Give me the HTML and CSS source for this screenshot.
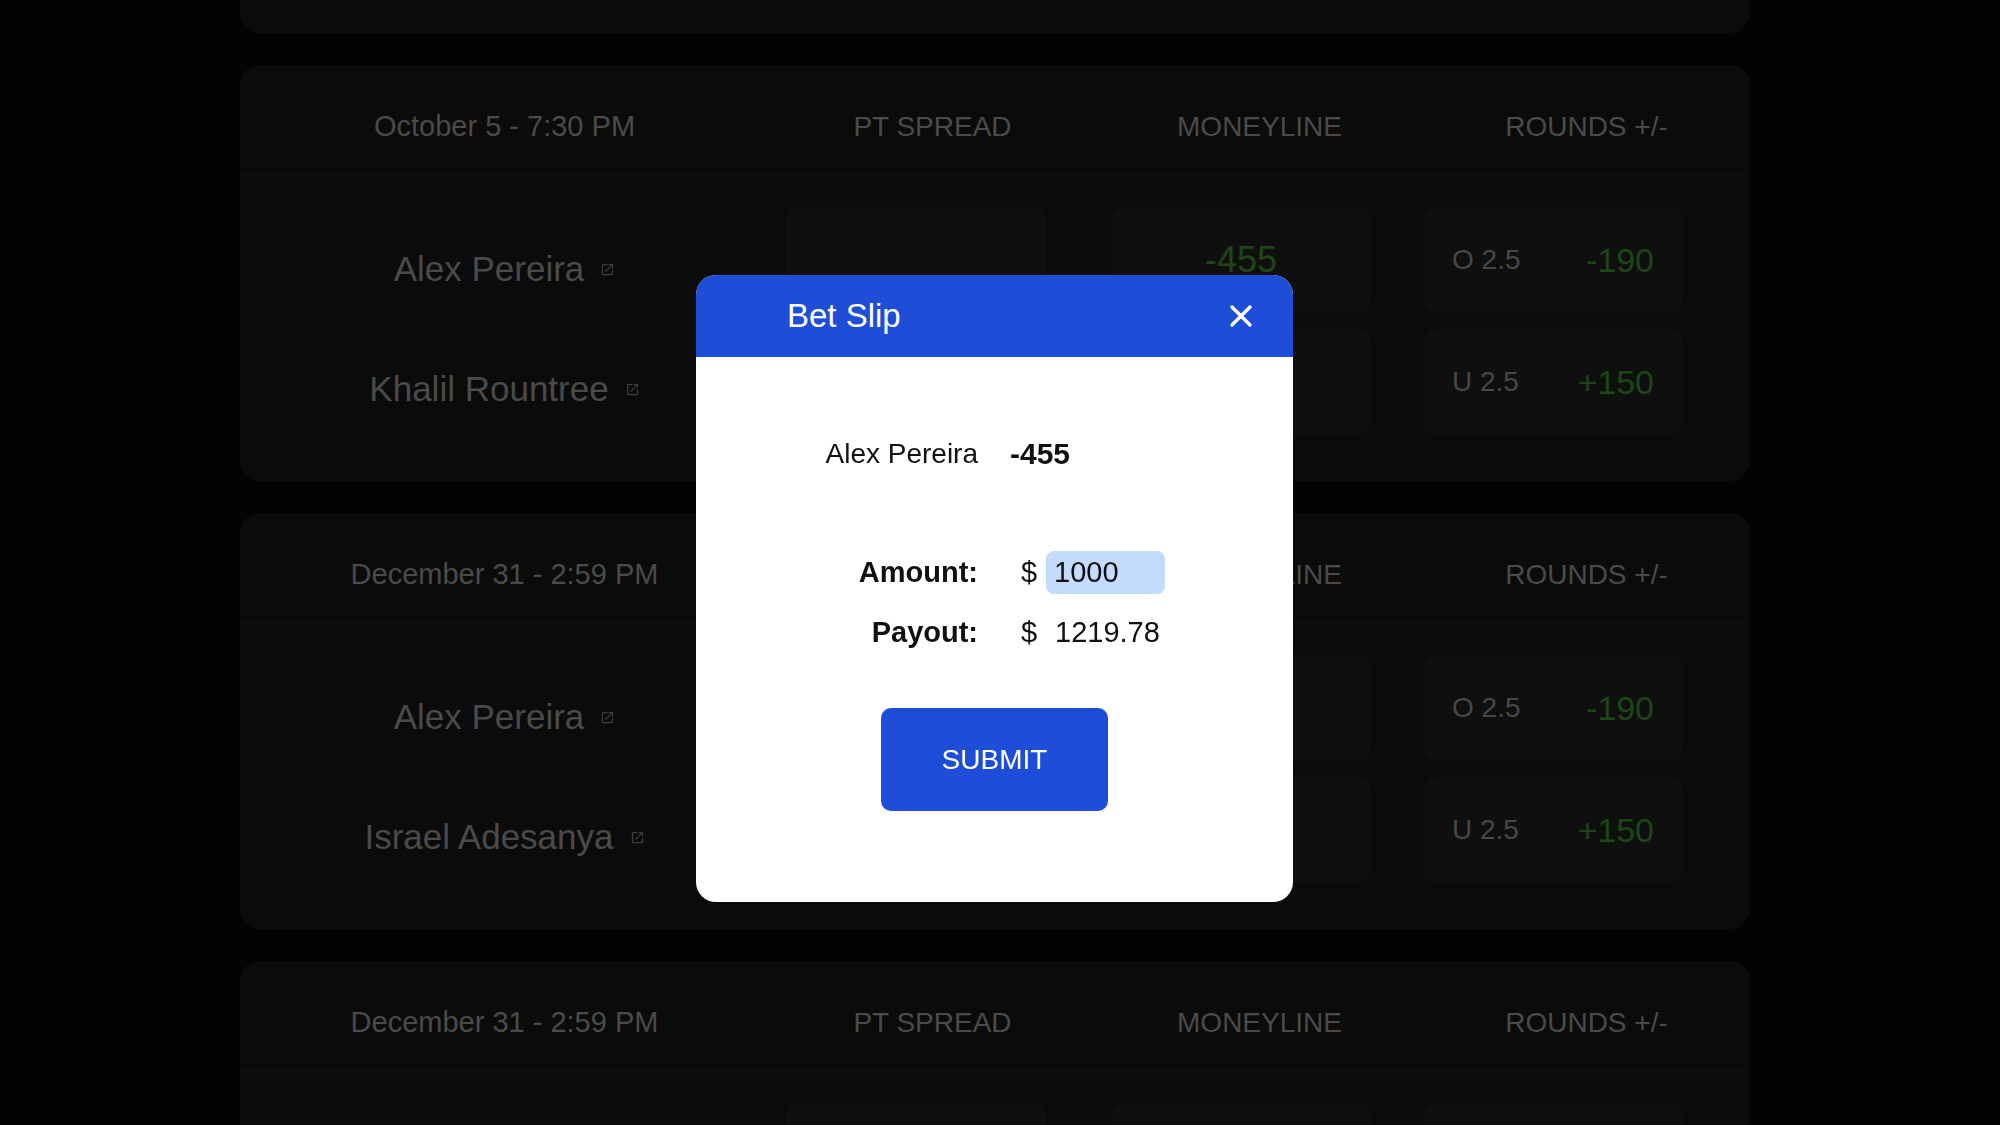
FILE: index.html
```html
<!DOCTYPE html>
<html lang="en">
<head>
<meta charset="utf-8">
<title>Fight Odds</title>
<link rel="stylesheet" href="styles.css">
</head>
<body>
<main class="list">
  <section class="card card-partial" aria-hidden="true"></section>

  <section class="card">
    <div class="card-head">
      <div class="head-date">October 5 - 7:30 PM</div>
      <div class="head-col">PT SPREAD</div>
      <div class="head-col">MONEYLINE</div>
      <div class="head-col">ROUNDS +/-</div>
    </div>
    <div class="card-body">
      <div class="names">
        <div class="name">Alex Pereira <svg class="ext" viewBox="0 0 24 24"><path d="M19 19H5V5h7V3H5a2 2 0 0 0-2 2v14a2 2 0 0 0 2 2h14c1.1 0 2-.9 2-2v-7h-2v7zM14 3v2h3.59l-9.83 9.83 1.41 1.41L19 6.41V10h2V3h-7z"/></svg></div>
        <div class="name">Khalil Rountree <svg class="ext" viewBox="0 0 24 24"><path d="M19 19H5V5h7V3H5a2 2 0 0 0-2 2v14a2 2 0 0 0 2 2h14c1.1 0 2-.9 2-2v-7h-2v7zM14 3v2h3.59l-9.83 9.83 1.41 1.41L19 6.41V10h2V3h-7z"/></svg></div>
      </div>
      <div class="boxes"><div class="box"></div><div class="box"></div></div>
      <div class="boxes"><div class="box center"><span class="odds">-455</span></div><div class="box center"><span class="odds">+350</span></div></div>
      <div class="boxes"><div class="box split"><span class="line">O 2.5</span><span class="odds">-190</span></div><div class="box split"><span class="line">U 2.5</span><span class="odds">+150</span></div></div>
    </div>
  </section>

  <section class="card">
    <div class="card-head">
      <div class="head-date">December 31 - 2:59 PM</div>
      <div class="head-col">PT SPREAD</div>
      <div class="head-col">MONEYLINE</div>
      <div class="head-col">ROUNDS +/-</div>
    </div>
    <div class="card-body">
      <div class="names">
        <div class="name">Alex Pereira <svg class="ext" viewBox="0 0 24 24"><path d="M19 19H5V5h7V3H5a2 2 0 0 0-2 2v14a2 2 0 0 0 2 2h14c1.1 0 2-.9 2-2v-7h-2v7zM14 3v2h3.59l-9.83 9.83 1.41 1.41L19 6.41V10h2V3h-7z"/></svg></div>
        <div class="name">Israel Adesanya <svg class="ext" viewBox="0 0 24 24"><path d="M19 19H5V5h7V3H5a2 2 0 0 0-2 2v14a2 2 0 0 0 2 2h14c1.1 0 2-.9 2-2v-7h-2v7zM14 3v2h3.59l-9.83 9.83 1.41 1.41L19 6.41V10h2V3h-7z"/></svg></div>
      </div>
      <div class="boxes"><div class="box"></div><div class="box"></div></div>
      <div class="boxes"><div class="box center"><span class="odds">-455</span></div><div class="box center"><span class="odds">+350</span></div></div>
      <div class="boxes"><div class="box split"><span class="line">O 2.5</span><span class="odds">-190</span></div><div class="box split"><span class="line">U 2.5</span><span class="odds">+150</span></div></div>
    </div>
  </section>

  <section class="card">
    <div class="card-head">
      <div class="head-date">December 31 - 2:59 PM</div>
      <div class="head-col">PT SPREAD</div>
      <div class="head-col">MONEYLINE</div>
      <div class="head-col">ROUNDS +/-</div>
    </div>
    <div class="card-body">
      <div class="names">
        <div class="name">Alex Pereira <svg class="ext" viewBox="0 0 24 24"><path d="M19 19H5V5h7V3H5a2 2 0 0 0-2 2v14a2 2 0 0 0 2 2h14c1.1 0 2-.9 2-2v-7h-2v7zM14 3v2h3.59l-9.83 9.83 1.41 1.41L19 6.41V10h2V3h-7z"/></svg></div>
        <div class="name">Israel Adesanya <svg class="ext" viewBox="0 0 24 24"><path d="M19 19H5V5h7V3H5a2 2 0 0 0-2 2v14a2 2 0 0 0 2 2h14c1.1 0 2-.9 2-2v-7h-2v7zM14 3v2h3.59l-9.83 9.83 1.41 1.41L19 6.41V10h2V3h-7z"/></svg></div>
      </div>
      <div class="boxes"><div class="box"></div><div class="box"></div></div>
      <div class="boxes"><div class="box center"><span class="odds">-455</span></div><div class="box center"><span class="odds">+350</span></div></div>
      <div class="boxes"><div class="box split"><span class="line">O 2.5</span><span class="odds">-190</span></div><div class="box split"><span class="line">U 2.5</span><span class="odds">+150</span></div></div>
    </div>
  </section>
</main>

<div class="overlay">
  <div class="modal">
    <div class="modal-head">
      <span class="modal-title">Bet Slip</span>
      <button class="close" aria-label="Close"><svg viewBox="0 0 24 24"><path d="M3 3L21 21M21 3L3 21"/></svg></button>
    </div>
    <div class="modal-body">
      <div class="slip">
        <span class="slip-name">Alex Pereira</span>
        <span class="slip-odds">-455</span>
        <span class="slip-label">Amount:</span>
        <span class="slip-value"><span class="dollar">$</span><span class="amount-input">1000</span></span>
        <span class="slip-label">Payout:</span>
        <span class="slip-value"><span class="dollar">$</span><span class="payout">1219.78</span></span>
      </div>
      <button class="submit">SUBMIT</button>
    </div>
  </div>
</div>
</body>
</html>
```

FILE: styles.css
```css
* { box-sizing: border-box; }

html, body {
  margin: 0;
  padding: 0;
  height: 100%;
  overflow: hidden;
}

body {
  background: #060606;
  font-family: "Liberation Sans", Arial, sans-serif;
  color: #949494;
}

.list {
  width: 1510px;
  margin: 0 0 0 240px;
  display: flex;
  flex-direction: column;
  gap: 32px;
}

.card {
  background: #161616;
  border-radius: 20px;
  height: 416px;
  flex: none;
}

.card-partial {
  height: 33px;
  border-radius: 0 0 20px 20px;
}

.card-head {
  display: grid;
  grid-template-columns: 529px 327px 327px 327px;
  height: 110px;
  padding-top: 14px;
  align-items: center;
  border-bottom: 1px solid #222222;
  font-size: 28px;
}

.head-date {
  font-size: 29px;
}

.head-date,
.head-col {
  text-align: center;
}

.card-body {
  display: grid;
  grid-template-columns: 546px 325px 312px 1fr;
  padding-top: 32px;
}

.names {
  display: grid;
  grid-template-rows: 106px 106px;
  row-gap: 14px;
  padding-right: 17px;
  padding-top: 9px;
}

.name {
  display: flex;
  align-items: center;
  justify-content: center;
  gap: 16px;
  font-size: 35px;
}

.ext {
  width: 15px;
  height: 15px;
  fill: #7a7a7a;
  flex: none;
}

.boxes {
  display: grid;
  grid-template-rows: 106px 106px;
  row-gap: 16px;
}

.box {
  width: 260px;
  background: #1e1e1e;
  border-radius: 14px;
  display: flex;
  align-items: center;
}

.box.center {
  justify-content: center;
}

.box.split {
  justify-content: space-between;
  padding: 0 29px 0 29px;
}

.odds {
  color: #3a8a2c;
  font-size: 34px;
}

.box.center .odds {
  font-size: 36px;
}

.line {
  font-size: 28px;
  color: #8e8e8e;
}

/* Modal */
.overlay {
  position: fixed;
  inset: 0;
  background: rgba(0, 0, 0, 0.5);
  display: flex;
  justify-content: center;
  align-items: flex-start;
  padding: 275px 11px 0 0;
}

.modal {
  width: 597px;
  background: #ffffff;
  border-radius: 20px;
  overflow: hidden;
  color: #111111;
}

.modal-head {
  height: 82px;
  background: #1e4ed8;
  display: flex;
  align-items: center;
  justify-content: space-between;
  padding: 0 40px 0 91px;
}

.modal-title {
  color: #ffffff;
  font-size: 33px;
}

.close {
  background: none;
  border: 0;
  padding: 0;
  width: 24px;
  height: 24px;
  display: flex;
}

.close svg {
  width: 24px;
  height: 24px;
  stroke: #ffffff;
  stroke-width: 3.4;
  stroke-linecap: round;
  fill: none;
}

.modal-body {
  display: flex;
  flex-direction: column;
  align-items: center;
  padding: 75px 0 91px;
}

.slip {
  align-self: stretch;
  display: grid;
  grid-template-columns: 282px 1fr;
  grid-template-rows: 43px 119px 60px;
  column-gap: 32px;
  align-items: end;
  font-size: 28px;
}

.slip-name,
.slip-label {
  text-align: right;
  line-height: 43px;
}

.slip-odds {
  font-weight: 700;
  font-size: 30px;
  line-height: 43px;
}

.slip-label {
  font-weight: 700;
  font-size: 29px;
}

.slip-value {
  display: flex;
  align-items: center;
  height: 43px;
  padding-left: 11px;
  font-size: 29px;
}

.dollar {
  width: 26px;
}

.amount-input {
  background: #c3dcfd;
  border-radius: 8px;
  width: 119px;
  height: 43px;
  line-height: 43px;
  padding-left: 8px;
  margin-left: -1px;
}

.payout {
  padding-left: 8px;
}

.submit {
  margin-top: 54px;
  width: 227px;
  height: 103px;
  background: #1e4ed8;
  border: 0;
  border-radius: 10px;
  color: #ffffff;
  font-family: inherit;
  font-size: 28px;
}
```
